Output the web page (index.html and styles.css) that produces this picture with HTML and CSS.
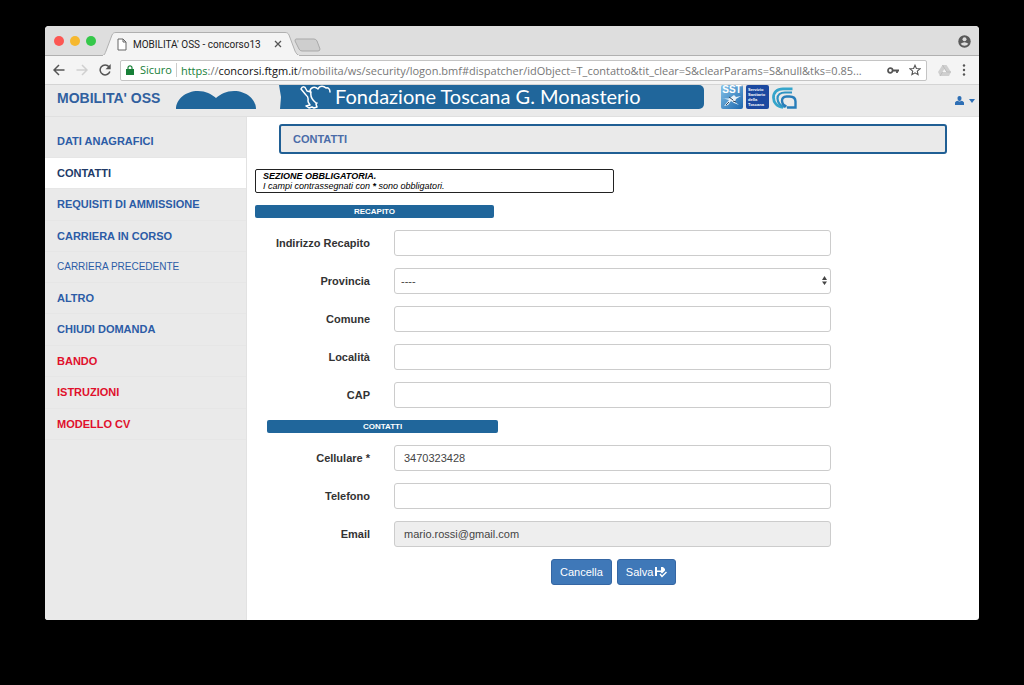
FILE: index.html
```html
<!DOCTYPE html>
<html lang="it">
<head>
<meta charset="utf-8">
<title>MOBILITA' OSS - concorso13</title>
<link rel="stylesheet" href="styles.css">
</head>
<body>
<div class="window">
  <div class="tabstrip">
    <div class="lights"><span class="light red"></span><span class="light yellow"></span><span class="light green"></span></div>
    <div class="tab">
      <svg class="tab-shape" viewBox="0 0 198 24" preserveAspectRatio="none" aria-hidden="true"><path d="M0 24 C3 23 3 21 4 19 L10 3 C11 1 12 .5 14 .5 H183 C185 .5 186 1 187 3 L193 19 C194 21 195 23 198 24 Z" fill="#f4f4f4" stroke="#b0b0b0"/><path d="M1 24H197" stroke="#f4f4f4" stroke-width="2"/></svg>
      <svg class="doc" width="10" height="13" viewBox="0 0 10 13" aria-hidden="true"><path d="M1 1h5l3 3v8H1zM6 1v3h3" fill="#fff" stroke="#666"/></svg>
      <span class="tab-title">MOBILITA' OSS - concorso13</span>
      <button class="plain" aria-label="Chiudi scheda"><svg width="8" height="8" viewBox="0 0 8 8"><path d="M1 1l6 6M7 1L1 7" stroke="#555" stroke-width="1.3"/></svg></button>
    </div>
    <button class="plain newtab" aria-label="Nuova scheda"><svg width="27" height="14" viewBox="0 0 27 14"><path d="M2 1h18q2 0 3 2l3 8q0 2-2 2H8q-2 0-3-2L1 3q0-2 1-2z" fill="#cecece" stroke="#a9a9a9"/></svg></button>
    <button class="plain profile" aria-label="Profilo"><svg width="13" height="13" viewBox="0 0 13 13"><circle cx="6.500" cy="6.500" r="6.200" fill="#5a5a5a"/><circle cx="6.500" cy="4.300" r="2" fill="#dedede"/><path d="M2.600 8.800q3.900-3 7.800 0-1.400 2-3.900 2t-3.900-2z" fill="#dedede"/></svg></button>
  </div>
  <div class="toolbar">
    <div class="nav-buttons">
      <button class="plain" aria-label="Indietro"><svg width="12" height="12" viewBox="0 0 12 12"><path d="M11.500 6H1.200M6 1L1 6l5 5" fill="none" stroke="#555" stroke-width="1.500"/></svg></button>
      <button class="plain" aria-label="Avanti"><svg width="12" height="12" viewBox="0 0 12 12"><path d="M.5 6h10.300M6 1l5 5-5 5" fill="none" stroke="#d0d0d0" stroke-width="1.500"/></svg></button>
      <button class="plain" aria-label="Ricarica"><svg width="12" height="12" viewBox="0 0 12 12"><path d="M10 2.700A5 5 0 1 0 10.900 7.500" fill="none" stroke="#555" stroke-width="1.500"/><path d="M11.700 0v5.200H6.500z" fill="#555"/></svg></button>
    </div>
    <div class="omnibox">
      <svg width="8" height="10" viewBox="0 0 8 10" aria-hidden="true"><path d="M0 4h8v6H0z" fill="#188038"/><path d="M2 4.500V2.800a2 2 0 0 1 4 0v1.700" fill="none" stroke="#188038" stroke-width="1.200"/></svg>
      <span class="secure">Sicuro</span>
      <span class="url"><span class="scheme">https</span>://<span class="host">concorsi.ftgm.it</span>/mobilita/ws/security/logon.bmf#dispatcher/idObject=T_contatto&amp;tit_clear=S&amp;clearParams=S&amp;null&amp;tks=0.85...</span>
      <button class="plain" aria-label="Password"><svg width="12" height="7" viewBox="0 0 12 7"><circle cx="3.300" cy="3.500" r="2.300" fill="none" stroke="#555" stroke-width="1.700"/><path d="M5.500 3.500H12M10 3.500V6" stroke="#555" stroke-width="1.800"/></svg></button>
      <button class="plain" aria-label="Preferiti"><svg width="12" height="12" viewBox="0 0 12 12"><path d="M6 1.200l1.400 3.300 3.600.3-2.700 2.400.8 3.500L6 8.800l-3.100 1.900.8-3.500L1 4.800l3.600-.3z" fill="none" stroke="#555" stroke-width="1.100"/></svg></button>
    </div>
    <button class="plain" aria-label="Drive"><svg width="13" height="11" viewBox="0 0 13 11"><path d="M4.500 0h4L13 7l-2 4H2L0 7z" fill="#cfcfcf"/><path d="M6.500 3.700l2 3.400h-4z" fill="#f4f4f4"/><path d="M4.500 0l4.300 7H13M2 11l2.500-4" stroke="#bdbdbd" fill="none"/></svg></button>
    <button class="plain" aria-label="Menu"><svg width="4" height="12" viewBox="0 0 4 12"><g fill="#555"><circle cx="2" cy="1.500" r="1.200"/><circle cx="2" cy="6" r="1.200"/><circle cx="2" cy="10.500" r="1.200"/></g></svg></button>
  </div>

  <header class="site-header">
    <a class="site-title" href="#">MOBILITA' OSS</a>
    <svg class="cloud" width="80" height="18" viewBox="0 0 80 18" aria-hidden="true"><path d="M0 18C0 8 10 0 22 0c8 0 13 3 18 7C45 3 50 0 58 0c12 0 22 8 22 18z" fill="#20669b"/></svg>
    <div class="brand">
      <svg width="32" height="24" viewBox="0 0 32 24" aria-hidden="true"><path d="M1 4C2 1 5 1 6 4l1 2 4 1M1 4l5 6c3 2 2 4 2 6 0 2 2 3 2 4l-4 1 3 2 3-1 2 1 3-1-1-3 1-1M10 7c0-5 5-6 8-3 2-4 6-3 8-1 2-1 4 1 4 4M11 7c-1 5 1 8 5 11" fill="none" stroke="#fff" stroke-width="1.500" stroke-linejoin="round" stroke-linecap="round"/></svg>
      <span>Fondazione Toscana G. Monasterio</span>
    </div>
    <div class="logos">
      <div class="sst"><svg width="22" height="24" viewBox="0 0 22 24" aria-hidden="true"><defs><linearGradient id="sky" x2="1" y2="1"><stop stop-color="#86c3e8"/><stop offset="1" stop-color="#1c68af"/></linearGradient></defs><rect width="22" height="24" rx="2" fill="url(#sky)"/><path d="M1 13q5 1 8 0l4-3 2 2 5-1-5 3-1 3 4 3-5-2-3-2-3 4-4 1 5-6z" fill="#e8f1f8"/><path d="M8 12l4 3M12 16l3 1M5 20l3-3" stroke="#31465c" fill="none"/></svg><span class="sst-text">SST</span></div>
      <div class="servizio">Servizio<br>Sanitario<br>della<br>Toscana</div>
      <svg class="cnr" width="25" height="22" viewBox="0 0 25 22" aria-hidden="true"><path d="M20.500 1.800H11C5 1.800 1.500 5.500 1.500 10.500S5 19.800 11 20.300" fill="none" stroke="#35a5cb" stroke-width="2.800"/><path d="M20 5.500H13c-4.500 0-7.500 2-7.500 6 0 4.500 3.500 8 7.500 8.500" fill="none" stroke="#2f93c3" stroke-width="2.200"/><path d="M14.500 19.500C9 18 8 9.500 14.500 9.500h3c4 0 6 1.500 6 5v6h-8.500" fill="none" stroke="#287db9" stroke-width="2.400"/></svg>
    </div>
    <button class="plain user" aria-label="Utente"><svg width="9" height="9" viewBox="0 0 9 9"><path d="M2.500 2.200C2.500.8 3.300 0 4.500 0s2 .8 2 2.200S5.800 5 4.500 5s-2-1.400-2-2.800zM0 9V6.500Q1 5 2.500 4.800q2 1.200 4 0Q8 5 9 6.500V9z" fill="#2e6fb5"/></svg><svg width="6" height="4" viewBox="0 0 6 4"><path d="M0 0h6L3 4z" fill="#2e6fb5"/></svg></button>
  </header>

  <div class="page">
    <nav class="sidebar">
      <ul class="menu">
        <li><a href="#">DATI ANAGRAFICI</a></li>
        <li class="active"><a href="#">CONTATTI</a></li>
        <li><a href="#">REQUISITI DI AMMISSIONE</a></li>
        <li><a href="#">CARRIERA IN CORSO</a></li>
        <li class="light-item"><a href="#">CARRIERA PRECEDENTE</a></li>
        <li><a href="#">ALTRO</a></li>
        <li><a href="#">CHIUDI DOMANDA</a></li>
        <li class="doc-item"><a href="#">BANDO</a></li>
        <li class="doc-item"><a href="#">ISTRUZIONI</a></li>
        <li class="doc-item"><a href="#">MODELLO CV</a></li>
      </ul>
    </nav>
    <main class="content">
      <h1 class="panel-title">CONTATTI</h1>
      <p class="notice"><strong>SEZIONE OBBLIGATORIA.</strong><br>I campi contrassegnati con <strong>*</strong> sono obbligatori.</p>
      <form class="form">
        <h2 class="section">RECAPITO</h2>
        <div class="row"><label for="indirizzo">Indirizzo Recapito</label><input class="control" id="indirizzo" type="text"></div>
        <div class="row"><label for="provincia">Provincia</label>
          <div class="select-wrap"><select class="control" id="provincia"><option>----</option></select><svg class="arrows" width="5" height="9" viewBox="0 0 5 9" aria-hidden="true"><path d="M0 4l2.500-4L5 4zM0 5.500h5L2.500 9z" fill="#444"/></svg></div></div>
        <div class="row"><label for="comune">Comune</label><input class="control" id="comune" type="text"></div>
        <div class="row"><label for="localita">Località</label><input class="control" id="localita" type="text"></div>
        <div class="row"><label for="cap">CAP</label><input class="control" id="cap" type="text"></div>
        <h2 class="section inner">CONTATTI</h2>
        <div class="row"><label for="cellulare">Cellulare *</label><input class="control" id="cellulare" type="text" value="3470323428"></div>
        <div class="row"><label for="telefono">Telefono</label><input class="control" id="telefono" type="text"></div>
        <div class="row"><label for="email">Email</label><input class="control" id="email" type="text" value="mario.rossi@gmail.com" readonly></div>
        <div class="actions">
          <button class="btn" type="button">Cancella</button>
          <button class="btn" type="button">Salva <svg width="12" height="11" viewBox="0 0 12 11" aria-hidden="true"><path d="M0 0h2v3.500h4V0h2l2 2v1.500L7 6.500 5.500 5H2v4H0z" fill="#fff"/><path d="M5 7l2 2.500L11.500 5" fill="none" stroke="#fff" stroke-width="1.500"/></svg></button>
        </div>
      </form>
    </main>
  </div>
</div>
</body>
</html>
```
FILE: styles.css
```css
* { box-sizing: border-box; }

body {
  margin: 0;
  padding: 26px 45px 65px;
  background: #000;
  font-family: "Liberation Sans", Arial, sans-serif;
  font-size: 11px;
  color: #333;
}

a { text-decoration: none; color: inherit; }
svg { flex: none; }

.plain {
  display: flex;
  align-items: center;
  padding: 0;
  border: 0;
  background: none;
}

.window {
  display: flex;
  flex-direction: column;
  min-height: calc(100vh - 91px);
  border-radius: 4px 4px 3px 3px;
  overflow: hidden;
  background: #fff;
}

/* Browser chrome */
.tabstrip {
  display: flex;
  align-items: flex-end;
  height: 30px;
  padding: 0 8px 0 9px;
  border-bottom: 1px solid #b0b0b0;
  background: #dedede;
  font-family: Roboto, sans-serif;
}

.lights { display: flex; gap: 6px; margin-bottom: 9px; }
.light { width: 10px; height: 10px; border-radius: 50%; }
.red { background: #fc5753; }
.yellow { background: #f6b82f; }
.green { background: #35c84a; }

.tab {
  position: relative;
  display: flex;
  align-items: center;
  gap: 6px;
  width: 198px;
  height: 24px;
  margin: 0 0 -1px 6px;
  padding: 0 18px 0 15px;
  font-size: 10px;
  color: #222;
}

.tab-shape { position: absolute; inset: 0; width: 100%; height: 100%; }
.tab > :not(.tab-shape) { position: relative; }
.tab-title { flex: 1; white-space: nowrap; }
.newtab { margin: 0 auto 3px -6px; }
.profile { margin-bottom: 7px; }

.toolbar {
  display: flex;
  align-items: center;
  gap: 11px;
  height: 29px;
  padding: 0 13px 0 8px;
  border-bottom: 1px solid #d4d4d4;
  background: #f4f4f4;
}

.toolbar > :nth-child(2) { margin-left: -2px; }
.nav-buttons { display: flex; gap: 11px; }

.omnibox {
  display: flex;
  flex: 1;
  align-items: center;
  min-width: 0;
  height: 21px;
  gap: 10px;
  padding: 0 5px;
  border: 1px solid #c4c4c4;
  border-radius: 2px;
  background: #fff;
  font-family: "Open Sans", sans-serif;
  font-size: 11px;
  color: #777;
}

.secure {
  margin-left: -4px;
  padding-right: 4px;
  border-right: 1px solid #ccc;
  line-height: 14px;
  color: #188038;
}

.url { flex: 1; margin-left: -6px; white-space: nowrap; }
.scheme { color: #188038; }
.host { color: #111; }

/* Site header */
.site-header {
  display: flex;
  align-items: flex-start;
  height: 32px;
  padding: 0 4px 0 12px;
  border-bottom: 1px solid #e0e0e0;
  background: #eaeaea;
}

.site-title { width: 119px; font-size: 14px; font-weight: 700; line-height: 26px; color: #30609f; }
.cloud { margin-top: 6px; }

.brand {
  display: flex;
  align-items: center;
  gap: 3px;
  width: 425px;
  height: 24px;
  margin-left: 23px;
  padding-left: 21px;
  border-radius: 0 5px 5px 0;
  background: #20669b;
  clip-path: polygon(0 0, 100% 0, 100% 100%, 1px 100%, 2px 50%);
  font-family: Lato, sans-serif;
  font-size: 20px;
  line-height: 22px;
  white-space: nowrap;
  color: #fff;
}

.brand span { padding-bottom: 2px; }

.logos { display: flex; gap: 3px; margin-left: 17px; }
.sst { display: grid; }
.sst > * { grid-area: 1 / 1; }
.sst-text { font-size: 10px; font-weight: 700; line-height: 10px; text-align: center; color: #fff; z-index: 1; }
.cnr { margin-top: 2px; }

.servizio {
  width: 23px;
  height: 24px;
  padding: 2px;
  border-radius: 2px;
  background: #1c49a0;
  font-size: 4px;
  font-weight: 700;
  line-height: 5px;
  white-space: nowrap;
  color: #fff;
}

.user { gap: 5px; margin: 11px 0 0 auto; }

/* Page */
.page { display: flex; flex: 1; }
.sidebar { width: 202px; padding-top: 9px; border-right: 1px solid #e2e2e2; background: #eaeaea; }

.menu {
  display: flex;
  flex-direction: column;
  min-height: 314px;
  margin: 0;
  padding: 0;
  list-style: none;
  font-weight: 700;
  color: #2c5ca6;
}

.menu li { display: flex; flex: 1; border-bottom: 1px solid #e6e6e6; }
.menu a { flex: 1; align-self: center; padding: 0 12px; }
.menu .active { background: #fff; color: #203a68; }
.menu .light-item { font-size: 10px; font-weight: 400; }
.menu .doc-item { color: #e0102c; }

.content { flex: 1; min-width: 0; padding-top: 7px; }

.panel-title {
  margin: 0 32px 15px;
  padding: 0 12px;
  border: 2px solid #205f94;
  border-radius: 3px;
  background: #eaeaea;
  font-size: 11px;
  line-height: 26px;
  color: #4a6ca8;
}

.notice {
  width: 49%;
  margin: 0 8px 12px;
  padding: 1px 7px;
  border: 1px solid #222;
  border-radius: 2px;
  font-size: 9px;
  font-style: italic;
  line-height: 10px;
  color: #000;
}

.form { display: grid; gap: 12px; }

.section {
  width: 239px;
  margin: 0 0 0 8px;
  border-radius: 2px;
  background: #20669b;
  font-size: 8px;
  line-height: 13px;
  text-align: center;
  color: #fff;
}

.section.inner { width: 231px; margin-left: 20px; }

.row {
  display: grid;
  grid-template-columns: 123fr 437fr 124fr;
  column-gap: 24px;
  align-items: center;
}

.row label { font-weight: 700; text-align: right; white-space: nowrap; }

.control {
  display: block;
  width: 100%;
  height: 26px;
  padding: 0 9px;
  border: 1px solid #ccc;
  border-radius: 3px;
  background: #fff;
  font: inherit;
  color: #444;
}

.control:read-only:not(select) { background: #eee; }
.select-wrap { position: relative; }
select.control { appearance: none; padding: 0 6px; }
.arrows { position: absolute; top: 8px; right: 4px; }

.actions { display: flex; gap: 5px; margin-left: 304px; }

.btn {
  display: flex;
  align-items: center;
  gap: 2px;
  height: 26px;
  padding: 0 8px;
  border: 1px solid #3566a3;
  border-radius: 3px;
  background: #3f78b8;
  font: inherit;
  color: #fff;
}
```
